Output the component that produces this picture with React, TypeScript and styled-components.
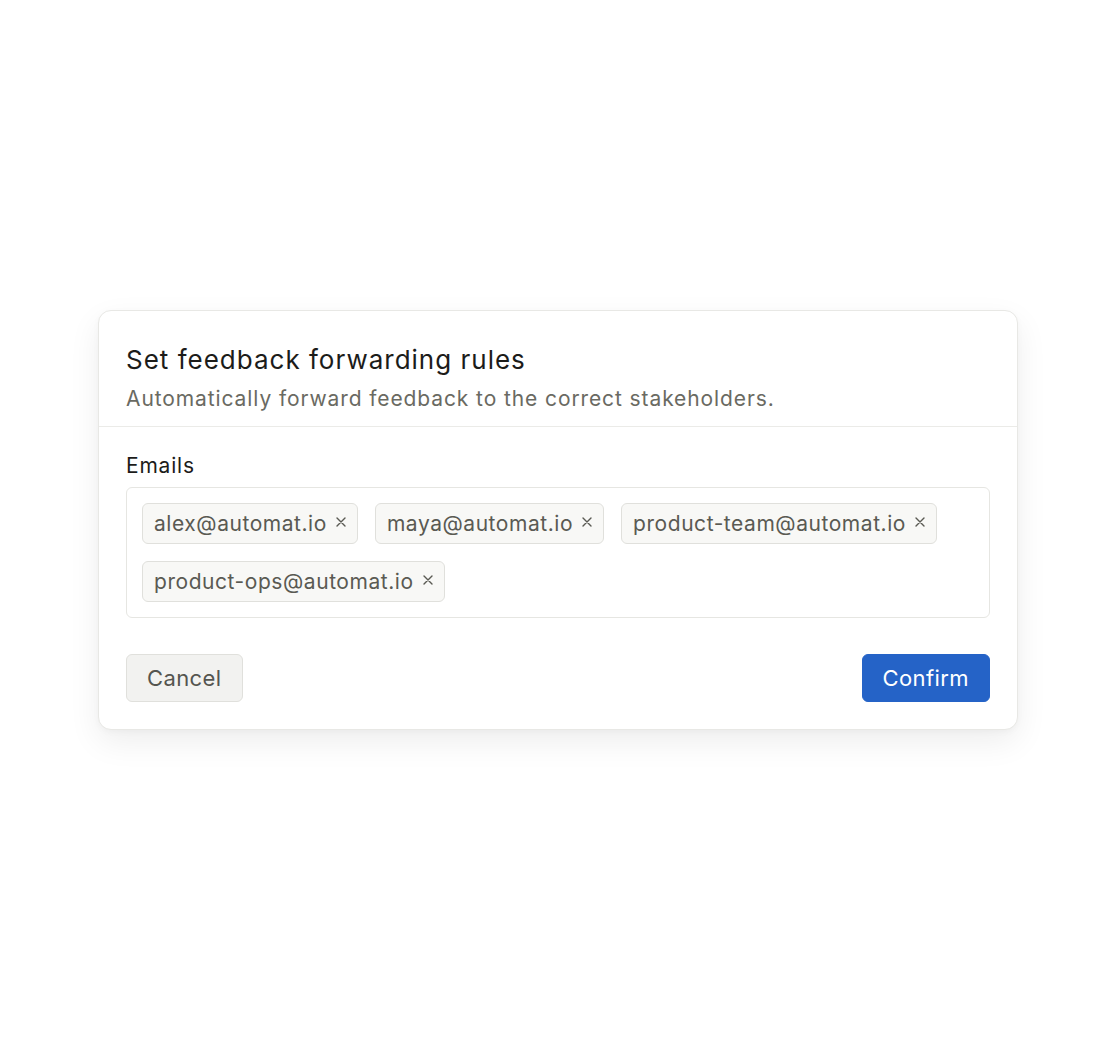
import React from "react";
import styled, { createGlobalStyle } from "styled-components";

const GlobalStyle = createGlobalStyle`
    html, body {
        margin: 0;
        padding: 0;
        background: #ffffff;
        font-family: Inter, "Noto Sans", sans-serif;
    }
`;

const emails = [
    "alex@automat.io",
    "maya@automat.io",
    "product-team@automat.io",
    "product-ops@automat.io",
];

const Page = styled.div`
    width: 1114px;
    height: 1040px;
    display: flex;
    justify-content: center;
    padding: 310px 0 0 2px;
    box-sizing: border-box;
`;

const Card = styled.div`
    width: 920px;
    height: 420px;
    box-sizing: border-box;
    background: #fff;
    border: 1px solid #e8e8e5;
    border-radius: 13px;
    box-shadow: 0 12px 32px rgba(0, 0, 0, 0.07), 0 2px 6px rgba(0, 0, 0, 0.03);
    display: flex;
    flex-direction: column;
`;

const Header = styled.div`
    padding: 32px 27px 11px;
    border-bottom: 1px solid #ebebe8;
`;

const Title = styled.h2`
    margin: 0;
    font-size: 26px;
    font-weight: 400;
    line-height: 34px;
    letter-spacing: 1px;
    color: #1c1c1a;
`;

const Subtitle = styled.p`
    margin: 6px 0 0;
    font-size: 21px;
    line-height: 32px;
    letter-spacing: 0.9px;
    color: #6a6a62;
`;

const Body = styled.div`
    padding: 25px 27px 26px;
    display: flex;
    flex-direction: column;
`;

const Label = styled.label`
    font-size: 21px;
    line-height: 28px;
    letter-spacing: 0.8px;
    color: #1c1c1a;
    margin-bottom: 7px;
`;

const Field = styled.div`
    border: 1px solid #e6e6e2;
    border-radius: 6px;
    padding: 15px;
    display: flex;
    flex-wrap: wrap;
    gap: 17px;
    width: 864px;
    box-sizing: border-box;
`;

const Chip = styled.span`
    display: inline-flex;
    align-items: center;
    gap: 9px;
    height: 41px;
    box-sizing: border-box;
    padding: 0 11px 0 11px;
    background: #f8f8f6;
    border: 1px solid #e0e0dc;
    border-radius: 6px;
    font-size: 21px;
    letter-spacing: 0.55px;
    color: #5a5a53;
`;

const Remove = styled.svg`
    width: 10px;
    height: 10px;
    margin-top: -3px;
    stroke: #5a5a53;
    stroke-width: 1.4;
    stroke-linecap: round;
`;

const Actions = styled.div`
    display: flex;
    justify-content: space-between;
    margin-top: 36px;
`;

const Button = styled.button<{ $primary?: boolean }>`
    height: 48px;
    padding: 0 20px;
    border-radius: 6px;
    font-family: inherit;
    font-size: 22px;
    letter-spacing: 0.4px;
    cursor: pointer;
    border: 1px solid ${(p) => (p.$primary ? "#2563c7" : "#e0e0dc")};
    background: ${(p) => (p.$primary ? "#2563c7" : "#f2f2f0")};
    color: ${(p) => (p.$primary ? "#ffffff" : "#55554f")};
`;

export default function App() {
    return (
        <Page>
            <GlobalStyle />
            <Card>
                <Header>
                    <Title>Set feedback forwarding rules</Title>
                    <Subtitle>Automatically forward feedback to the correct stakeholders.</Subtitle>
                </Header>
                <Body>
                    <Label>Emails</Label>
                    <Field>
                        {emails.map((e) => (
                            <Chip key={e}>
                                {e}
                                <Remove viewBox="0 0 10 10">
                                    <path d="M1 1L9 9M9 1L1 9" />
                                </Remove>
                            </Chip>
                        ))}
                    </Field>
                    <Actions>
                        <Button>Cancel</Button>
                        <Button $primary>Confirm</Button>
                    </Actions>
                </Body>
            </Card>
        </Page>
    );
}
